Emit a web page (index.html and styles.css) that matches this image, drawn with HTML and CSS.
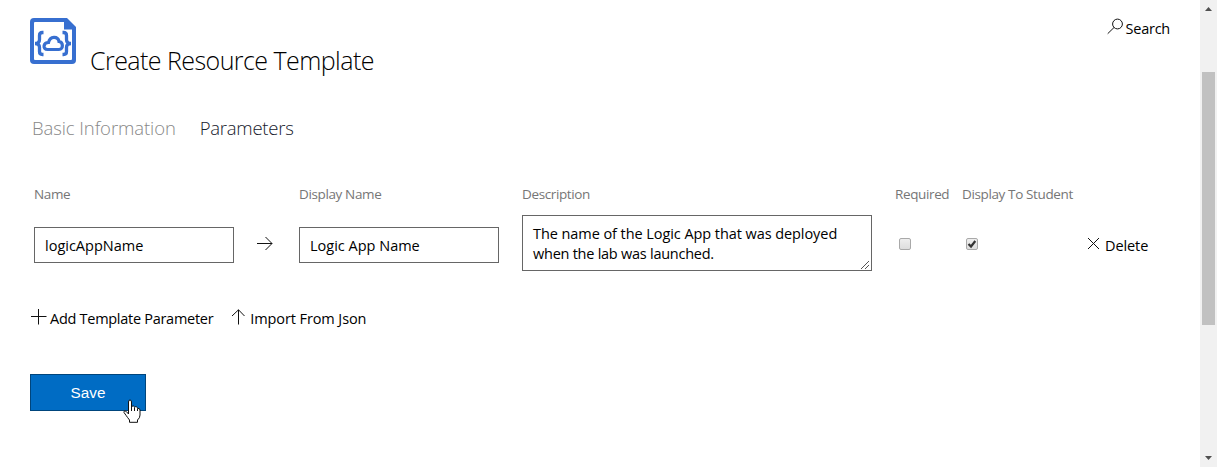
FILE: index.html
```html
<!DOCTYPE html>
<html lang="en">
<head>
<meta charset="utf-8">
<title>Create Resource Template</title>
<link rel="stylesheet" href="styles.css">
</head>
<body>
<main class="page">
  <header class="header">
    <svg class="logo" width="46" height="46" viewBox="0 0 46 46">
      <path d="M4 0H37L46 9V42Q46 46 42 46H4Q0 46 0 42V4Q0 0 4 0Z" fill="#376fd0"/>
      <path d="M5 4H34V11.500H42V41Q42 42 41 42H5Q4 42 4 41V5Q4 4 5 4Z" fill="#fff"/>
      <path d="M13.500 14.500H12.500Q9.500 14.500 9.500 17.500V21.500Q9.500 25.500 5 25.500Q9.500 25.500 9.500 29.500V33.500Q9.500 36.500 12.500 36.500H13.500M32.500 14.500H33.500Q36.500 14.500 36.500 17.500V21.500Q36.500 25.500 41 25.500Q36.500 25.500 36.500 29.500V33.500Q36.500 36.500 33.500 36.500H32.500" fill="none" stroke="#376fd0" stroke-width="3.300"/>
      <path d="M17.500 31.500C12.500 31.500 13 24.500 18.500 24.500C20 17.500 28 18 29 23.500C33.500 24 33.500 31.500 29 31.500Z" fill="none" stroke="#376fd0" stroke-width="3.200"/>
    </svg>
    <h1 class="title">Create Resource Template</h1>
    <a class="action search">
      <svg class="search-icon" width="17" height="17" viewBox="0 0 17 17"><circle cx="10.500" cy="6" r="4.900"/><path d="M7 9.500L.7 15.700"/></svg>
      <span class="search-text">Search</span>
    </a>
  </header>
  <nav class="tabs">
    <a class="tab tab-muted">Basic Information</a>
    <a class="tab tab-active">Parameters</a>
  </nav>
  <section class="params">
    <span class="label">Name</span>
    <span></span>
    <span class="label label-display">Display Name</span>
    <span class="label label-description">Description</span>
    <span class="label label-required">Required</span>
    <span class="label label-student">Display To Student</span>
    <span></span>
    <div class="field field-name">logicAppName</div>
    <svg class="arrow" width="16" height="15" viewBox="0 0 16 15"><path d="M0 7.500H15M8.500 1L15 7.500L8.500 14"/></svg>
    <div class="field field-display">Logic App Name</div>
    <div class="field area"><span class="line1">The name of the Logic App that was deployed</span><br><span class="line2">when the lab was launched.</span>
      <svg class="grip" width="10" height="10" viewBox="0 0 10 10"><path d="M1 9L9 1M5 9L9 5"/></svg>
    </div>
    <span class="check"></span>
    <span class="check"><svg width="10" height="10" viewBox="0 0 10 10"><path d="M1.500 5L4 7.500L8.300 2"/></svg></span>
    <a class="action delete">
      <svg class="delete-icon" width="13" height="13" viewBox="0 0 13 13"><path d="M1 1L12 12M12 1L1 12"/></svg>
      <span>Delete</span>
    </a>
  </section>
  <div class="links">
    <a class="action add">
      <svg width="16" height="16" viewBox="0 0 16 16"><path d="M0 7.500H15.500M7.500 0V15.500"/></svg>
      <span>Add Template Parameter</span>
    </a>
    <a class="action import">
      <svg width="14" height="16" viewBox="0 0 14 16"><path d="M7.500 15.500V.8M1 7L7.500 .8L13.500 7"/></svg>
      <span>Import From Json</span>
    </a>
  </div>
  <div class="save">Save
    <svg class="cursor" width="18" height="24" viewBox="0 0 18 24"><path d="M5.500 15V3Q5.500 1 7 1Q8.500 1 8.500 3V8Q9 6.700 10.500 7Q11.500 7.300 11.500 8.500Q12.300 7.300 13.500 7.800Q14.500 8.200 14.500 9.500Q16.800 8.800 17 11V16Q17 19 14.500 21V23.300H6.500V21Q4.500 18.500 3 16.300L1 13.500Q.5 12 2 11.800Q3 11.800 5.500 15Z" fill="#fff" stroke="#111"/><path d="M8.500 8V12M11.500 9V12M14.500 10V12" stroke="#111"/></svg>
  </div>
</main>
<aside class="scrollbar">
  <svg width="7" height="4" viewBox="0 0 7 4"><path d="M0 4L3.500 0L7 4Z"/></svg>
  <div class="thumb"></div>
  <svg class="down" width="7" height="4" viewBox="0 0 7 4"><path d="M0 0L3.500 4L7 0Z"/></svg>
</aside>
</body>
</html>
```
FILE: styles.css
```css
* { box-sizing: border-box; }
body {
  margin: 0;
  width: 1217px;
  height: 467px;
  display: flex;
  overflow: hidden;
  background: #fff;
  color: #000;
  font-family: "Open Sans", "Noto Sans", sans-serif;
  font-size: 14.5px;
}
svg { display: block; flex: none; fill: none; stroke: #111; stroke-width: 1; }
.page { width: 1200px; padding: 18px 30px 0; }
.header { display: flex; height: 66px; }
.logo { stroke: none; }
.title {
  margin: 24px 0 0 14px;
  font-size: 25px;
  font-weight: 300;
  line-height: 36px;
  letter-spacing: -0.55px;
  white-space: nowrap;
}
.action { display: flex; line-height: 20px; letter-spacing: -0.1px; white-space: nowrap; }
.search { margin: 0 0 0 auto; height: 20px; gap: 2px; }
.search-text { padding-top: 1px; letter-spacing: -0.25px; }
.tabs { display: flex; gap: 24px; height: 100px; padding: 31px 0 0 2px; }
.tab { font-size: 18.5px; font-weight: 300; line-height: 26px; white-space: nowrap; }
.tab-muted { color: #888; letter-spacing: -0.09px; }
.tab-active { color: #16202c; letter-spacing: -0.25px; }
.params {
  display: grid;
  grid-template-columns: 223px 42px 223px 373px 67px 125px 70px;
  grid-template-rows: 31px 56px;
  align-items: center;
  padding-left: 4px;
}
.label { align-self: start; font-size: 13.5px; line-height: 20px; letter-spacing: -0.37px; color: #767676; white-space: nowrap; }
.field { width: 200px; height: 36px; border: 1px solid #666; padding: 0 10px; line-height: 35px; white-space: nowrap; }
.field-name, .field-display { margin-top: 4px; }
.area { position: relative; width: 350px; height: 56px; padding-top: 8px; line-height: 20px; letter-spacing: -0.07px; }
.line2 { letter-spacing: -0.25px; }
.grip { position: absolute; right: 1px; bottom: 0; stroke: #555; }
.check {
  width: 12px;
  height: 12px;
  margin-left: 4px;
  border: 1px solid #a9a9a9;
  border-radius: 2px;
  background: linear-gradient(#eee, #ddd);
  margin-top: 2px;
}
.check svg { stroke: #333; stroke-width: 2.2; }
.delete { gap: 5px; padding-top: 5px; }
.delete-icon { margin-top: 1px; }
.links { display: flex; gap: 19px; height: 103px; padding: 38px 0 0 1px; }
.links .action { gap: 3px; }
.links .add { letter-spacing: -0.28px; }
.links .import { gap: 5px; margin-left: -1px; }
.save {
  position: relative;
  width: 116px;
  height: 37px;
  border: 1px solid #00457c;
  background: #006cc4;
  color: #fff;
  font: 15.3px/35px "Liberation Sans", Arial, sans-serif;
  text-align: center;
}
.cursor { position: absolute; left: 92px; top: 24px; }
.scrollbar { width: 17px; background: #f1f1f1; display: flex; flex-direction: column; align-items: center; padding-top: 7px; }
.scrollbar svg { fill: #505050; stroke: none; }
.thumb { width: 13px; height: 253px; margin-top: 61px; background: #c1c1c1; }
.down { margin: auto 0 7px; }
```
